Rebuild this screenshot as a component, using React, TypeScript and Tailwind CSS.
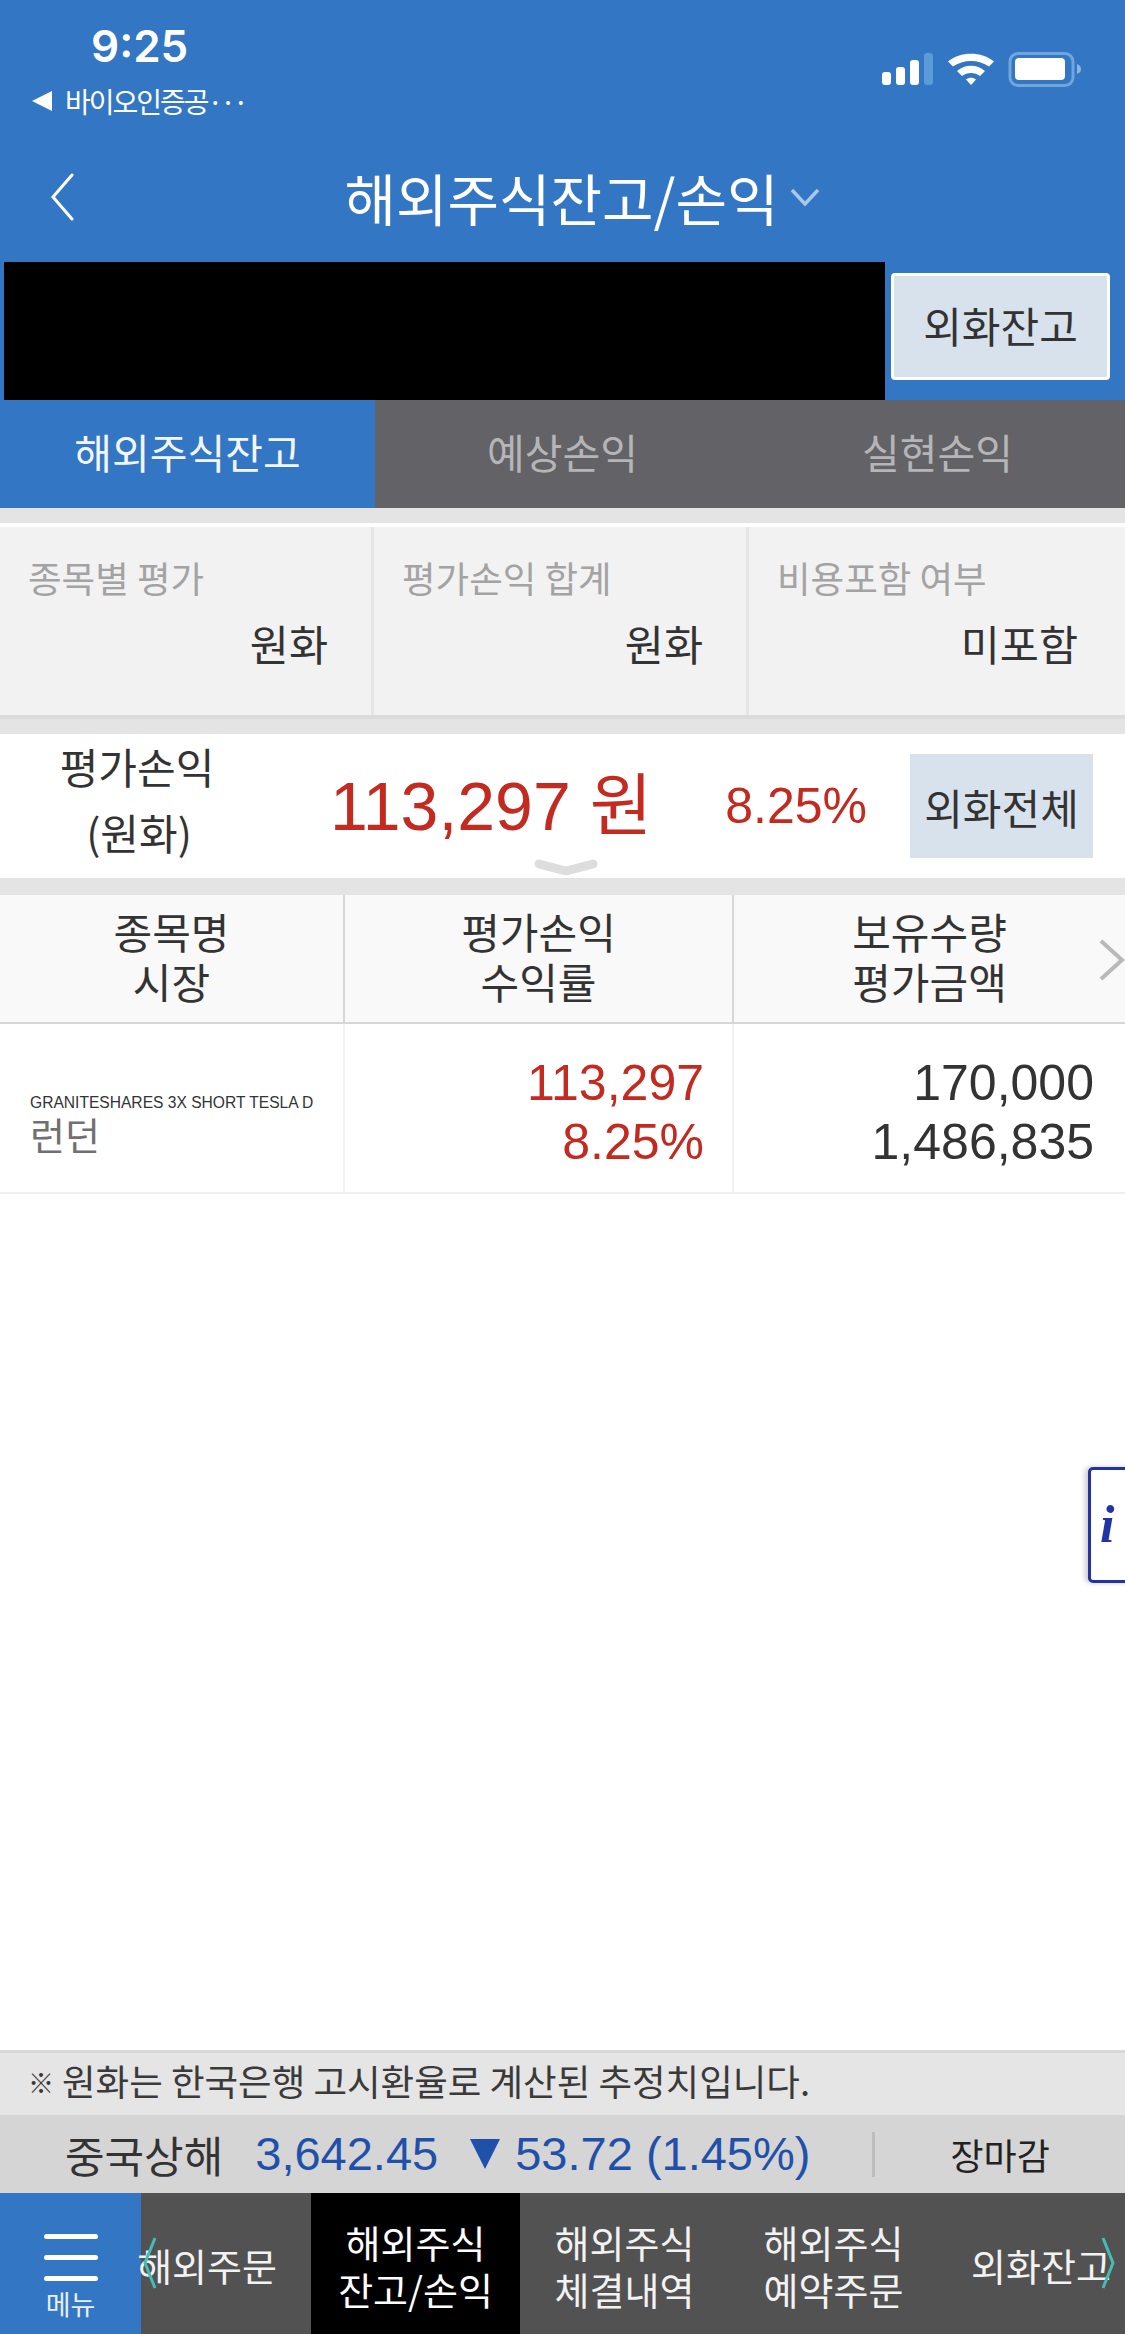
const sans = "font-['Noto_Sans_CJK_KR','Noto_Sans',sans-serif]"
const num = "font-['Liberation_Sans','Noto_Sans_CJK_KR',sans-serif]"

function StatusIcons() {
  return (
    <svg width="200" height="36" viewBox="0 0 200 36" className="mt-[52px]">
      <rect x="0" y="20" width="9" height="13" rx="3" fill="#fff" />
      <rect x="14" y="15" width="9" height="18" rx="3" fill="#fff" />
      <rect x="28" y="8" width="9" height="25" rx="3" fill="#fff" />
      <rect x="42" y="1" width="9" height="32" rx="3" fill="#5b9bd8" />
      <path d="M66 9.5C78 -1 100 -1 112 9.5L107 14.5C97 7 81 7 71 14.5Z" fill="#fff" />
      <path d="M75 19C83 12 95 12 103 19L98 24C93 20 85 20 80 24Z" fill="#fff" />
      <path d="M84 27.5C87 25 91 25 94 27.5L89 33Z" fill="#fff" />
      <rect x="128" y="1.5" width="63" height="32" rx="8" fill="none" stroke="#6fa6dc" strokeWidth="3" />
      <rect x="133" y="6" width="50" height="22" rx="4" fill="#fff" />
      <path d="M195 12C198 13 199 15 199 17C199 19 198 21 195 22Z" fill="#8ab6e2" />
    </svg>
  )
}

function FilterCell({ label, value, className }: { label: string; value: string; className: string }) {
  return (
    <div className={`flex flex-col px-7 pt-[26px] ${className}`}>
      <span className="text-[36.5px] leading-[50px] text-[#a3a3a3] whitespace-nowrap">{label}</span>
      <span className="mt-[10px] pr-[15px] text-right text-[42.5px] leading-[60px] text-[#333]">{value}</span>
    </div>
  )
}

function HeadCell({ top, bottom, className }: { top: string; bottom: string; className: string }) {
  return (
    <div className={`flex flex-col items-center justify-center pb-[5px] text-[42px] leading-[50px] text-[#333] ${className}`}>
      <span>{top}</span>
      <span>{bottom}</span>
    </div>
  )
}

function NavItem({ lines, className = '' }: { lines: string[]; className?: string }) {
  return (
    <div className={`h-full shrink-0 flex flex-col justify-center pt-[2px] text-[38px] leading-[47px] text-[#f2f2f2] ${className}`}>
      {lines.map((l) => (
        <span key={l} className="whitespace-nowrap">{l}</span>
      ))}
    </div>
  )
}

export default function App() {
  return (
    <div className={`relative w-[1125px] h-[2334px] flex flex-col overflow-hidden bg-white ${sans}`}>
      {/* 상단 헤더 */}
      <header className="h-[262px] shrink-0 bg-[#3376c4] text-white flex flex-col">
        <div className="h-[140px] flex justify-between pr-[43px]">
          <div className="pl-[32px] pt-[18px] flex flex-col">
            <span className="pl-[59px] font-['Inter',sans-serif] font-semibold text-[44px] leading-[56px]">9:25</span>
            <div className="flex items-center mt-[2px]">
              <svg width="20" height="20" viewBox="0 0 20 20" className="mr-[13px]">
                <path d="M20 0V20L0 10Z" fill="#fff" />
              </svg>
              <span className="text-[28px] leading-[50px] tracking-[-2px] whitespace-nowrap">바이오인증공<span className="tracking-[-3px]">···</span></span>
            </div>
          </div>
          <StatusIcons />
        </div>
        <div className="grid grid-cols-[1fr_auto_1fr] items-center h-[114px]">
          <div className="pl-[50px]">
            <svg width="24" height="48" viewBox="0 0 24 48" fill="none" stroke="#fff" strokeWidth="3" strokeLinecap="round">
              <path d="M22 2L3 24L22 46" />
            </svg>
          </div>
          <h1 className="-ml-[2px] text-[56px] leading-[70px] font-normal whitespace-nowrap">해외주식잔고/손익</h1>
          <div className="pl-[11px]">
            <svg width="30" height="18" viewBox="0 0 30 18" fill="none" stroke="#a9c8ea" strokeWidth="3.5">
              <path d="M2 2L15 16L28 2" />
            </svg>
          </div>
        </div>
      </header>

      {/* 계좌 */}
      <div className="h-[138px] shrink-0 bg-[#3376c4] flex pl-[4px]">
        <div className="w-[881px] h-full bg-black" />
        <button className="ml-[6px] mt-[11px] w-[219px] h-[107px] pb-[5px] bg-[#d8e2ec] border-[3px] border-white rounded-[4px] text-[42px] text-[#333]">
          외화잔고
        </button>
      </div>

      {/* 탭 */}
      <div className="h-[108px] shrink-0 flex bg-[#636266] text-[41px] pb-[5px]">
        <div className="w-[375px] -mb-[5px] flex items-center justify-center pb-[5px] bg-[#3376c4] text-[#f2f6fb]">해외주식잔고</div>
        <div className="w-[375px] flex items-center justify-center text-[#b5b5b7]">예상손익</div>
        <div className="w-[375px] flex items-center justify-center text-[#b5b5b7]">실현손익</div>
      </div>

      <div className="h-[15px] shrink-0 bg-[#e4e4e4]" />
      <div className="h-[4px] shrink-0 bg-white" />

      {/* 조회 조건 */}
      <div className="h-[192px] shrink-0 flex bg-[#f2f2f2] border-b-[4px] border-[#dcdcdc]">
        <FilterCell label="종목별 평가" value="원화" className="w-[374px] border-r-[3px] border-[#e6e6e6]" />
        <FilterCell label="평가손익 합계" value="원화" className="w-[375px] border-r-[3px] border-[#e6e6e6]" />
        <FilterCell label="비용포함 여부" value="미포함" className="flex-1 pr-[32px]" />
      </div>
      <div className="h-[15px] shrink-0 bg-[#e4e4e4]" />

      {/* 평가손익 요약 */}
      <div className="relative h-[144px] shrink-0 flex items-center bg-white">
        <div className="w-[274px] h-full flex flex-col items-center justify-center pb-[14px] text-[42px] leading-[66px] text-[#333]">
          <span>평가손익</span>
          <span className="pl-[4px]">(원화)</span>
        </div>
        <div className={`ml-[56px] text-[68px] leading-none text-[#c32a20] whitespace-nowrap ${num}`}>113,297 원</div>
        <div className={`ml-[73px] text-[50px] leading-none text-[#c32a20] ${num}`}>8.25%</div>
        <button className="ml-[43px] w-[183px] h-[104px] bg-[#d8e2ec] text-[42px] text-[#333]">외화전체</button>
        <svg width="66" height="20" viewBox="0 0 66 20" fill="none" stroke="#dddddd" strokeWidth="9" strokeLinecap="round" strokeLinejoin="round" className="absolute left-[533px] bottom-0">
          <path d="M6 6L33 13L60 6" />
        </svg>
      </div>
      <div className="h-[17px] shrink-0 bg-[#e4e4e4]" />

      {/* 테이블 헤더 */}
      <div className="relative h-[129px] shrink-0 flex bg-[#f9f9f9] border-b-[2px] border-[#d6d6d6]">
        <HeadCell top="종목명" bottom="시장" className="w-[345px] border-r-[2px] border-[#d6d6d6]" />
        <HeadCell top="평가손익" bottom="수익률" className="w-[389px] border-r-[2px] border-[#d6d6d6]" />
        <HeadCell top="보유수량" bottom="평가금액" className="w-[391px]" />
        <svg width="26" height="42" viewBox="0 0 26 42" fill="none" stroke="#b9b9b9" strokeWidth="4" className="absolute right-0 top-[44px]">
          <path d="M2 2L23 21L2 40" />
        </svg>
      </div>

      {/* 테이블 행 */}
      <div className="h-[170px] shrink-0 flex border-b-[2px] border-[#f0f0f0]">
        <div className="w-[345px] border-r-[2px] border-[#f2f2f2] pl-[30px] pt-[69px] flex flex-col">
          <span className={`text-[15.6px] leading-[20px] text-[#333] whitespace-nowrap ${num}`}>GRANITESHARES 3X SHORT TESLA D</span>
          <span className="text-[38px] leading-[42px] text-[#707070]">런던</span>
        </div>
        <div className={`w-[389px] border-r-[2px] border-[#f2f2f2] pr-[28px] pt-[30px] flex flex-col items-end text-[50px] leading-[59px] text-[#c32a20] ${num}`}>
          <span>113,297</span>
          <span>8.25%</span>
        </div>
        <div className={`w-[391px] pr-[31px] pt-[30px] flex flex-col items-end text-[50px] leading-[59px] text-[#333] ${num}`}>
          <span>170,000</span>
          <span>1,486,835</span>
        </div>
      </div>

      <div className="flex-1" />

      {/* 안내 문구 */}
      <div className="h-[65px] shrink-0 flex items-center pl-[28px] pb-[6px] bg-[#e5e5e5] border-t-[3px] border-[#d8d8d8] text-[36.5px] text-[#3a3a3a] whitespace-nowrap">
        <span className="text-[26px] font-bold w-[34px]">※</span>
        <span>원화는 한국은행 고시환율로 계산된 추정치입니다.</span>
      </div>

      {/* 지수 */}
      <div className="h-[78px] shrink-0 flex items-center bg-[#d5d5d5]">
        <span className="ml-[65px] text-[43px] text-[#333]">중국상해</span>
        <span className={`ml-[32px] text-[47px] text-[#2150ab] ${num}`}>3,642.45</span>
        <svg width="30" height="30" viewBox="0 0 30 30" className="ml-[32px]">
          <path d="M0 0H30L15 30Z" fill="#2150ab" />
        </svg>
        <span className={`ml-[15px] text-[47px] text-[#2150ab] whitespace-nowrap ${num}`}>53.72 (1.45%)</span>
        <div className="ml-[62px] w-[3px] h-[45px] bg-[#bdbdbd]" />
        <span className="ml-[75px] text-[36px] text-[#222]">장마감</span>
      </div>

      {/* 하단 메뉴 */}
      <nav className="relative h-[141px] shrink-0 flex bg-[#525252]">
        <div className="w-[141px] shrink-0 bg-[#3376c4] flex flex-col items-center pt-[41px]">
          <div className="w-[54px] h-[5px] rounded-full bg-white" />
          <div className="w-[54px] h-[5px] rounded-full bg-white mt-[16px]" />
          <div className="w-[54px] h-[5px] rounded-full bg-white mt-[16px]" />
          <span className="mt-[5px] text-[27px] leading-[36px] text-[#e6f0fa]">메뉴</span>
        </div>
        <NavItem lines={['해외주문']} className="w-[170px] items-end pr-[34px]" />
        <NavItem lines={['해외주식', '잔고/손익']} className="w-[209px] items-center bg-black text-white" />
        <NavItem lines={['해외주식', '체결내역']} className="w-[209px] items-center" />
        <NavItem lines={['해외주식', '예약주문']} className="w-[209px] items-center" />
        <NavItem lines={['외화잔고']} className="w-[187px] items-start pl-[33px]" />
        <svg width="14" height="52" viewBox="0 0 14 52" fill="none" stroke="#45bdb6" strokeWidth="3" className="absolute left-[143px] top-[44px]">
          <path d="M12 1L2 26L12 51" />
        </svg>
        <svg width="14" height="52" viewBox="0 0 14 52" fill="none" stroke="#45bdb6" strokeWidth="3" className="absolute left-[1101px] top-[44px]">
          <path d="M2 1L12 26L2 51" />
        </svg>
      </nav>

      {/* 정보 탭 */}
      <div className="absolute left-[1088px] top-[1467px] w-[50px] h-[116px] flex items-center pl-[9px] bg-white border-[3px] border-[#2233a6] rounded-l-[5px] shadow-[-3px_0_5px_rgba(0,0,0,0.2)]">
        <span className="font-['Liberation_Serif',serif] italic font-bold text-[52px] leading-none text-[#2233a6]">i</span>
      </div>
    </div>
  )
}
